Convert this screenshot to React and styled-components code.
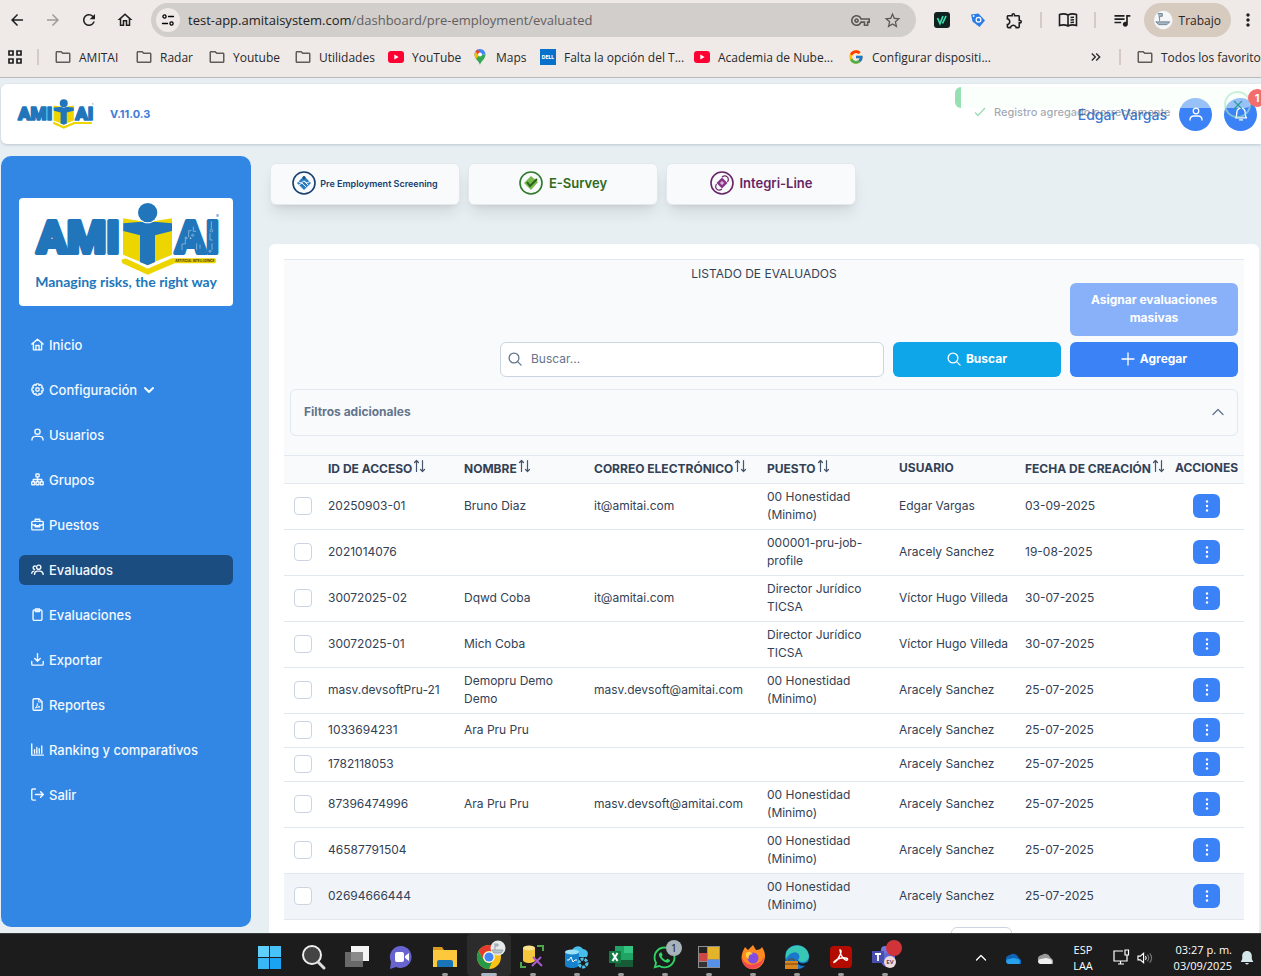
import React from 'react'
import styled, { createGlobalStyle } from 'styled-components'
import {
    MdArrowBack, MdArrowForward, MdRefresh, MdOutlineHome, MdStarBorder, MdOutlineExtension,
    MdQueueMusic, MdMoreVert, MdOutlineVpnKey, MdOutlineFolder, MdKeyboardDoubleArrowRight
} from 'react-icons/md'
import { FcGoogle } from 'react-icons/fc'
import { FaWhatsapp } from 'react-icons/fa'

const GlobalStyle = createGlobalStyle`
    * {
        box-sizing: border-box;
    }
    body {
        margin: 0;
        font-family: Inter, "Liberation Sans", sans-serif;
        font-size: 12px;
        color: #334155;
        background-color: #e8eff3;
    }
    button, input {
        font-family: inherit;
    }
    a {
        color: inherit;
        text-decoration: none;
    }
`

const Screen = styled.div`
    height: 100vh;
    display: flex;
    flex-direction: column;
    overflow: hidden;
`

/* Browser */

const Browser = styled.div`
    flex: none;
    background-color: #efeae8;
    border-bottom: 1px solid #b9b9bb;
    font-family: "Open Sans", "Noto Sans", sans-serif;
    color: #28282a;
`
const Toolbar = styled.div`
    height: 40px;
    display: flex;
    align-items: center;
`
const ToolGroup = styled.div`
    display: flex;
    align-items: center;
    gap: 2px;
`
const ToolButton = styled.button`
    width: 34px;
    height: 34px;
    padding: 0;
    border: none;
    background: none;
    display: flex;
    align-items: center;
    justify-content: center;
    font-size: ${props => props.$size || 18}px;
    color: ${props => props.$color || "#1f1f20"};
`
const MoreButton = styled(ToolButton)`
    width: 26px;
`
const Address = styled.div`
    flex: 1;
    height: 34px;
    margin: 0 9px;
    padding: 0 8px 0 5px;
    border-radius: 17px;
    background-color: #d2cecb;
    display: flex;
    align-items: center;
`
const SiteInfo = styled.button`
    width: 24px;
    height: 24px;
    padding: 0;
    border: none;
    border-radius: 50%;
    background-color: #efeae8;
    display: flex;
    align-items: center;
    justify-content: center;
`
const Url = styled.div`
    flex: 1;
    margin-left: 8px;
    font-size: 13px;
    color: #636060;
    b {
        font-weight: 400;
        color: #222;
    }
`
const AddressButton = styled(ToolButton)`
    width: 32px;
    color: #5b5856;
`
const Divider = styled.div`
    width: 2px;
    height: 16px;
    margin: 0 9px;
    background-color: #d6cbc4;
`
const Profile = styled.button`
    width: 87px;
    height: 34px;
    margin: 0 4px 0 5px;
    padding: 0 10px;
    border: none;
    border-radius: 17px;
    background-color: #d7cbc0;
    display: flex;
    align-items: center;
    gap: 6px;
    font-size: 12px;
    color: #2a2624;
`
const Bookmarks = styled.nav`
    height: 37px;
    padding: 0 0 3px 8px;
    display: flex;
    align-items: center;
    overflow: hidden;
`
const Bookmark = styled.a`
    flex: none;
    width: ${props => props.$width}px;
    display: flex;
    align-items: center;
    gap: 8px;
    font-size: 12px;
    white-space: nowrap;
    color: #28282a;
    svg {
        flex: none;
    }
`
const BookmarkDivider = styled(Divider)`
    flex: none;
    margin: 0 16px 0 15px;
`
const MoreBookmarks = styled.div`
    flex: none;
    width: 173px;
    margin-left: auto;
    display: flex;
    align-items: center;
    overflow: hidden;
    > svg {
        flex: none;
    }
`

/* App */

const AppArea = styled.div`
    flex: 1;
    min-height: 0;
    padding: 6px 0 0 1px;
    overflow: hidden;
    background-color: #e8eff3;
`
const Header = styled.header`
    position: relative;
    height: 60px;
    padding: 0 4px 0 16px;
    border-radius: 6px 0 0 6px;
    background-color: #fff;
    box-shadow: 0 1px 3px #b9c6cf;
    display: flex;
    align-items: center;
`
const Version = styled.span`
    margin-left: 16px;
    flex: 1;
    font-size: 11px;
    font-weight: 700;
    color: #3f7ed8;
`
const UserName = styled.span`
    font-size: 14px;
    font-weight: 500;
    color: #3b77d2;
`
const RoundButton = styled.button`
    position: relative;
    width: 33px;
    height: 33px;
    margin-left: 12px;
    padding: 0;
    border: none;
    border-radius: 50%;
    background-color: #3b82f6;
    color: #fff;
    display: flex;
    align-items: center;
    justify-content: center;
`
const Badge = styled.span`
    position: absolute;
    z-index: 2;
    top: -9px;
    right: -9px;
    width: 18px;
    height: 18px;
    border-radius: 50%;
    background-color: #f36d6d;
    font-size: 11px;
    font-weight: 700;
    line-height: 18px;
    text-align: center;
`
const Toast = styled.div`
    position: absolute;
    top: 3px;
    right: 10px;
    width: 296px;
    height: 21px;
    padding: 0 12px 0 13px;
    border-left: 6px solid #96e0b1;
    border-radius: 6px;
    background-color: rgba(246, 255, 249, 0.5);
    display: flex;
    align-items: flex-start;
    justify-content: space-between;
    pointer-events: none;
`
const ToastText = styled.div`
    display: flex;
    align-items: center;
    gap: 8px;
    margin-top: 16px;
    font-size: 11px;
    font-weight: 500;
    line-height: 18px;
    white-space: nowrap;
    color: rgba(100, 110, 125, 0.6);
`
const ToastClose = styled.div`
    position: absolute;
    top: 4px;
    right: 0;
    width: 27px;
    height: 27px;
    border: 2px solid rgba(170, 230, 195, 0.6);
    border-radius: 50%;
    display: flex;
    align-items: center;
    justify-content: center;
`
const Body = styled.div`
    margin-top: 12px;
    display: flex;
    align-items: flex-start;
    gap: 18px;
`
const Sidebar = styled.aside`
    flex: none;
    width: 250px;
    height: calc(100vh - 205px);
    padding: 42px 18px 0;
    border-radius: 10px;
    background-color: #3387e4;
`
const LogoBox = styled.div`
    height: 108px;
    border-radius: 4px;
    background-color: #fff;
    margin-bottom: 24px;
`
const Menu = styled.nav`
    display: flex;
    flex-direction: column;
    gap: 15px;
`
const MenuItem = styled.a`
    height: 30px;
    padding: 0 12px 1px;
    border-radius: 6px;
    background-color: ${props => props.$active ? "#1c4d80" : "transparent"};
    display: flex;
    align-items: center;
    gap: 5px;
    font-size: 13px;
    font-weight: 500;
    && {
        color: #f2f8ff;
    }
`
const Main = styled.main`
    flex: 1;
    min-width: 0;
    padding: 7px 2px 0 0;
`
const Tabs = styled.div`
    display: flex;
    gap: 8px;
    padding-left: 1px;
`
const Tab = styled.button`
    width: 190px;
    height: 42px;
    padding: 0 0 2px;
    border: 1px solid #e4e8ec;
    border-radius: 6px;
    background-color: #f8fafc;
    box-shadow: 0 10px 15px -3px rgba(0, 0, 0, 0.1), 0 4px 6px -4px rgba(0, 0, 0, 0.1);
    display: flex;
    align-items: center;
    justify-content: center;
    gap: ${props => props.$small ? 4 : 6}px;
    font-size: ${props => props.$small ? 9 : 13}px;
    font-weight: 600;
    color: ${props => props.color};
`
const Card = styled.section`
    margin-top: 39px;
    padding: 15px 15px 40px;
    border-radius: 6px;
    background-color: #fff;
`
const ListHeader = styled.div`
    padding: 5px 6px 19px;
    border-top: 1px solid #e2e8f0;
    background-color: #f8fafc;
`
const ListTitle = styled.h1`
    margin: 0;
    font-size: 12px;
    font-weight: 400;
    line-height: 18px;
    text-align: center;
    color: #334155;
`
const Actions = styled.div`
    display: grid;
    grid-template-columns: 1fr 168px 168px;
    gap: 6px 9px;
    padding-left: 210px;
`
const ActionButton = styled.button`
    grid-column: ${props => props.$last ? 3 : "auto"};
    height: ${props => props.$tall ? 53 : 35}px;
    padding: 0 16px 2px;
    border: none;
    border-radius: 6px;
    background-color: ${props => props.color};
    display: flex;
    align-items: center;
    justify-content: center;
    gap: 5px;
    font-size: 12px;
    font-weight: 700;
    line-height: 18px;
    color: #fff;
`
const Search = styled.label`
    height: 35px;
    padding: 0 7px 2px;
    border: 1px solid #cbd5e1;
    border-radius: 6px;
    background-color: #fff;
    color: #64748b;
    display: flex;
    align-items: center;
    gap: 9px;
`
const SearchInput = styled.input`
    flex: 1;
    min-width: 0;
    padding: 0;
    border: none;
    outline: none;
    font-size: 12px;
    &::placeholder {
        color: #64748b;
        opacity: 1;
    }
`
const Filters = styled.button`
    width: 100%;
    height: 47px;
    margin-top: 12px;
    padding: 0 12px 2px 13px;
    border: 1px solid #e2e8f0;
    border-radius: 6px;
    background-color: #f8fafc;
    display: flex;
    align-items: center;
    justify-content: space-between;
    font-size: 12px;
    font-weight: 700;
    color: #64748b;
`
const Table = styled.table`
    width: 100%;
    table-layout: fixed;
    border-collapse: collapse;
`
const Th = styled.th`
    height: 28px;
    padding: 0 0 3px 6px;
    border-top: 1px solid #e2e8f0;
    border-bottom: 1px solid #e2e8f0;
    background-color: #f8fafc;
    font-size: 12px;
    font-weight: 700;
    line-height: 18px;
    text-align: left;
    white-space: nowrap;
    svg {
        margin-left: 1px;
    }
`
const Td = styled.td`
    padding: 4px 6px 5px;
    border-bottom: 1px solid #e2e8f0;
    font-size: 12px;
    line-height: 18px;
    color: #334155;
    white-space: ${props => props.$wrap ? "normal" : "nowrap"};
`
const Row = styled.tr`
    background-color: ${props => props.$hover ? "#f1f5f9" : "#fff"};
`
const Check = styled.input`
    appearance: none;
    display: block;
    width: 18px;
    height: 18px;
    margin: 0 0 0 4px;
    border: 1px solid #cbd5e1;
    border-radius: 4px;
    background-color: #fff;
`
const RowButton = styled.button`
    width: 27px;
    height: 24px;
    margin: 0 auto;
    padding: 0;
    border: none;
    border-radius: 6px;
    background-color: #3b82f6;
    display: flex;
    align-items: center;
    justify-content: center;
`
const Paginator = styled.div`
    display: flex;
    justify-content: flex-end;
    padding: 7px 232px 0 0;
`
const PageSize = styled.select`
    width: 61px;
    height: 34px;
    border: 1px solid #cbd5e1;
    border-radius: 6px;
    background-color: #fff;
    appearance: none;
`

/* Taskbar */

const Taskbar = styled.footer`
    position: relative;
    flex: none;
    height: 43px;
    padding: 0 7px 0 247px;
    border-top: 1px solid #3a3a3a;
    background-color: #1c1c1c;
    color: #fff;
    font-family: "Open Sans", "Noto Sans", sans-serif;
    display: flex;
    align-items: center;
`
const TaskButton = styled.button`
    position: relative;
    flex: none;
    width: 44px;
    height: 42px;
    padding: 4px 0 0;
    border: none;
    border-radius: 4px;
    background-color: ${props => props.$active ? "#2c2c2c" : "transparent"};
    display: flex;
    align-items: center;
    justify-content: center;
    &::after {
        content: "";
        position: absolute;
        bottom: 0;
        width: ${props => props.$active ? 16 : 6}px;
        height: 3px;
        border-radius: 2px;
        background-color: ${props => props.$active ? "#a9b8c4" : props.$open ? "#9a9a9a" : "transparent"};
    }
`
const Tray = styled.div`
    margin-left: auto;
    display: flex;
    align-items: center;
    padding-top: 5px;
    font-size: 11px;
    line-height: 16px;
`
const TrayIcon = styled.span`
    width: ${props => props.$width}px;
    display: flex;
    justify-content: center;
`
const Language = styled.div`
    width: 44px;
    text-align: center;
`
const Clock = styled.div`
    width: 79px;
    text-align: right;
    margin-right: 7px;
    white-space: nowrap;
`

/* Drawings */

function Stroke({ size = 14, width = 1.3, children }) {
    return (
        <svg width={size} height={size} viewBox="0 0 14 14" fill="none" stroke="currentColor" strokeWidth={width} strokeLinecap="round" strokeLinejoin="round" aria-hidden="true">
            {children}
        </svg>
    )
}

const menuIcons = {
    home: <><path d="M.9 6.6 7 1.4l6.1 5.2M2.6 5.6v7.2h8.8V5.6" /><path d="M5.3 12.6V8h3.4v4.6" /></>,
    cog: <><circle cx="7" cy="7" r="1.9" /><path d="M5.7.9h2.6l.4 1.7 1.5-.9 1.9 1.9-.9 1.5 1.8.5v2.7l-1.8.5.9 1.5-1.9 1.9-1.5-.9-.4 1.8H5.7l-.4-1.8-1.5.9-1.9-1.9.9-1.5L1 8.3V5.6l1.8-.5-.9-1.5 1.9-1.9 1.5.9z" /></>,
    user: <><circle cx="7" cy="4" r="2.8" /><path d="M1 13c0-2.5 1.8-4 4-4h4c2.2 0 4 1.5 4 4" /></>,
    sitemap: <><rect x="5.3" y="1" width="3.4" height="3.2" rx=".6" /><rect x=".8" y="9.4" width="3.2" height="3.2" rx=".6" /><rect x="5.4" y="9.4" width="3.2" height="3.2" rx=".6" /><rect x="10" y="9.4" width="3.2" height="3.2" rx=".6" /><path d="M7 4.2v5M2.4 9.2V7h9.2v2.2" /></>,
    briefcase: <><rect x=".8" y="3.6" width="12.4" height="9.2" rx="1" /><path d="M4.5 3.5V1.3h5v2.2M.9 7l3.5 1.2h5.2L13.1 7M4.6 7v2.6h4.8V7" /></>,
    users: <><circle cx="8.3" cy="4.6" r="2.3" /><path d="M3.7 12.2c.2-2.4 1.5-3.5 3.3-3.5h2.6c2 0 3.3 1.3 3.5 3.5M4.9 3.3C3 3 2.2 4.2 2.3 5.3c.1 1 .8 1.5 1.5 1.7M.8 11c.1-1.4.9-2.2 2.3-2.3" /></>,
    clipboard: <><rect x="2.2" y="2.2" width="9.6" height="11.2" rx="1.5" /><path d="M4.8 2.2V1h4.4v2.8H4.8z" /></>,
    download: <path d="M.8 9.2v2.6c0 .8.6 1.3 1.3 1.3h9.8c.8 0 1.3-.6 1.3-1.3V9.2M7 .8v8M4 6l3 3 3-3" />,
    pdf: <><path d="M2.2 2c0-.7.5-1.2 1.2-1.2h5.2l3.3 3.3v7.9c0 .7-.5 1.2-1.2 1.2H3.4c-.7 0-1.2-.5-1.2-1.2z" /><path d="M8.3 1v3.3h3.4M4.6 10.8C6.5 9.5 7 7.8 6.9 6M6.8 7.6c.6 1.2 1.6 2 3 2.1-2 0-3.2.2-4.6.8" strokeWidth="1" /></>,
    chart: <path d="M.8 1v12h12.6M3.8 11V7.2M6.3 11V4.8M8.9 11V6.2M11.6 11V3.3" />,
    logout: <path d="M4.8 13H2.2C1.4 13 .8 12.4.8 11.7V2.3C.8 1.6 1.4 1 2.2 1h2.6M4.8 7h8.4M10.3 4l3 3-3 3" />
}

function BrandMark({ box, width, height, detailed }) {
    return (
        <svg width={width} height={height} viewBox={box} role="img" aria-label="Amitai">
            <g fill="#2176bb" stroke="#2176bb" strokeWidth="12" strokeLinejoin="round" fontFamily="Roboto, sans-serif" fontWeight="900" fontSize="134">
                <text x="110" y="309">AMI</text>
                <text x="526" y="309">AI</text>
            </g>
            {detailed && (
                <g stroke="#a9cdea" strokeWidth="2" fill="none">
                    <path d="M546 300v-18h10v-14M566 262v-20h8M580 230v14h8M590 300v-20M600 296v-12M634 214v22M630 250v20h8M636 280v20" />
                    <circle cx="558" cy="264" r="3" /><circle cx="578" cy="256" r="3" /><circle cx="634" cy="242" r="4" /><circle cx="630" cy="304" r="3" />
                </g>
            )}
            <path fill="#edd500" d="M369 205l74 12 73-12v112l-73 28-74-28z" />
            <path fill="#edd500" d="M364 329l14-4 65 31 72-31h130q8 7 0 15H524l-81 34-76-34z" />
            <path fill="#fff" d="M369 314l51 21v7l-51-20zM516 314l-51 21v7l51-20z" />
            <path fill="#2176bb" d="M370 220l45-4h56l45 4v23l-51 13v80l-22 10-23-10v-80l-50-13z" />
            <circle cx="443" cy="188" r="32" fill="#fff" />
            <circle cx="443" cy="188" r="29" fill="#2176bb" />
            <text x="648" y="205" fontSize="13" fill="#2176bb" fontFamily="Inter, sans-serif">®</text>
            {detailed && <>
                <text x="526" y="337" fontSize="9" fontWeight="700" fill="#3b3a12" fontFamily="Inter, sans-serif">ARTIFICIAL INTELLIGENCE</text>
                <text x="378" y="410" textAnchor="middle" fontSize="42" fontWeight="700" fill="#2176bb" fontFamily="Lato, sans-serif">Managing risks, the right way</text>
            </>}
        </svg>
    )
}

function TabIcon({ kind, color }) {
    return (
        <svg width="24" height="24" viewBox="0 0 24 24" fill="none" aria-hidden="true">
            <circle cx="12" cy="12" r="11" stroke={color} strokeWidth="1.6" />
            {kind === "screening" && <>
                <path d="M12 5l7 7-7 7-7-7z" fill="#2b7cc0" />
                <path d="M5 10l4 2 3-2 3 2 4-2M7 14l3-2 4 4M12 10l4 4" stroke="#fff" strokeWidth=".9" />
                <circle cx="12" cy="6.5" r="1.5" fill="#1b4c80" />
            </>}
            {kind === "survey" && <>
                <path d="M12 5l7 6-7 8-7-7z" fill="#79b84a" />
                <path d="M8 11l3 4 7-7" stroke="#28651f" strokeWidth="2" />
            </>}
            {kind === "line" && <>
                <path d="M12 6.500l5.500 5.500-5.500 5.500L6.500 12z" fill="#873584" />
                <path d="M12 6c4-3 8 1 5.500 5M12 18c-4 3-8-1-5.500-5" stroke="#70296e" strokeWidth="1.2" />
                <path d="M12 10v4M10 12h4" stroke="#fff" strokeWidth=".8" />
            </>}
        </svg>
    )
}

const YoutubeIcon = () => (
    <svg width="16" height="16" viewBox="0 0 16 16" aria-hidden="true">
        <rect y="2" width="16" height="12" rx="3" fill="#f03" />
        <path d="M6.3 5.5v5L10.6 8z" fill="#fff" />
    </svg>
)
const MapsIcon = () => (
    <svg width="16" height="16" viewBox="0 0 16 16" aria-hidden="true">
        <path d="M8 16C7.5 12.5 2.5 10 2.5 5.5h11C13.5 10 8.5 12.5 8 16z" fill="#34a853" />
        <path d="M2.5 5.5C2.5 3 4.5 0 8 0s5.5 3 5.5 5.5z" fill="#4285f4" />
        <path d="M3.6 2.2 8 5.5 4 10C3 8.6 2.5 7.2 2.5 5.5c0-1.3.4-2.4 1.1-3.3z" fill="#fbbc04" />
        <path d="M3.6 2.2A5.500 5.500 0 0 1 6 .4L8 4 6 6z" fill="#ea4335" />
        <circle cx="8" cy="5.5" r="2" fill="#fff" />
    </svg>
)
const DellIcon = () => (
    <svg width="16" height="16" viewBox="0 0 16 16" aria-hidden="true">
        <rect width="16" height="16" fill="#0672cb" />
        <text x="8" y="10" textAnchor="middle" fontSize="5" fontWeight="800" fill="#fff" fontFamily="Inter, sans-serif">DELL</text>
    </svg>
)
const Folder = () => <MdOutlineFolder size={18} color="#5f5b59" style={{ margin: "0 -1px" }} />

const bookmarks = [
    { label: "AMITAI", width: 81, icon: <Folder /> },
    { label: "Radar", width: 73, icon: <Folder /> },
    { label: "Youtube", width: 86, icon: <Folder /> },
    { label: "Utilidades", width: 93, icon: <Folder /> },
    { label: "YouTube", width: 84, icon: <YoutubeIcon /> },
    { label: "Maps", width: 68, icon: <MapsIcon /> },
    { label: "Falta la opción del T...", width: 154, icon: <DellIcon /> },
    { label: "Academia de Nube...", width: 154, icon: <YoutubeIcon /> },
    { label: "Configurar dispositi...", width: 140, icon: <FcGoogle size={16} /> }
]

const menu = [
    { label: "Inicio", icon: "home" },
    { label: "Configuración", icon: "cog", sub: true },
    { label: "Usuarios", icon: "user" },
    { label: "Grupos", icon: "sitemap" },
    { label: "Puestos", icon: "briefcase" },
    { label: "Evaluados", icon: "users", active: true },
    { label: "Evaluaciones", icon: "clipboard" },
    { label: "Exportar", icon: "download" },
    { label: "Reportes", icon: "pdf" },
    { label: "Ranking y comparativos", icon: "chart" },
    { label: "Salir", icon: "logout" }
]

const columns = [
    { label: "", width: 38 },
    { label: "ID DE ACCESO", width: 136, sort: true },
    { label: "NOMBRE", width: 130, sort: true },
    { label: "CORREO ELECTRÓNICO", width: 173, sort: true },
    { label: "PUESTO", width: 132, sort: true },
    { label: "USUARIO", width: 126 },
    { label: "FECHA DE CREACIÓN", width: 150, sort: true },
    { label: "ACCIONES", width: 75 }
]

const rows = [
    ["20250903-01", "Bruno Diaz", "it@amitai.com", "00 Honestidad (Minimo)", "Edgar Vargas", "03-09-2025"],
    ["2021014076", "", "", "000001-pru-job-profile", "Aracely Sanchez", "19-08-2025"],
    ["30072025-02", "Dqwd Coba", "it@amitai.com", "Director Jurídico TICSA", "Víctor Hugo Villeda", "30-07-2025"],
    ["30072025-01", "Mich Coba", "", "Director Jurídico TICSA", "Víctor Hugo Villeda", "30-07-2025"],
    ["masv.devsoftPru-21", "Demopru Demo Demo", "masv.devsoft@amitai.com", "00 Honestidad (Minimo)", "Aracely Sanchez", "25-07-2025"],
    ["1033694231", "Ara Pru Pru", "", "", "Aracely Sanchez", "25-07-2025"],
    ["1782118053", "", "", "", "Aracely Sanchez", "25-07-2025"],
    ["87396474996", "Ara Pru Pru", "masv.devsoft@amitai.com", "00 Honestidad (Minimo)", "Aracely Sanchez", "25-07-2025"],
    ["46587791504", "", "", "00 Honestidad (Minimo)", "Aracely Sanchez", "25-07-2025"],
    ["02694666444", "", "", "00 Honestidad (Minimo)", "Aracely Sanchez", "25-07-2025"]
]

const SortIcon = () => (
    <svg width="13" height="14" viewBox="0 0 13 14" fill="none" stroke="#475569" strokeWidth="1.2" strokeLinecap="round" strokeLinejoin="round" aria-hidden="true">
        <path d="M3.5 12.5v-11M1.5 3.5l2-2 2 2M9.5 1.5v11M7.5 10.5l2 2 2-2" />
    </svg>
)

/* Taskbar icons share a 28 unit canvas */
const tasks = [
    { name: "Inicio de Windows", art: <><path fill="#5fd0fb" d="M3 3h11v11H3z" /><path fill="#47c2f8" d="M15 3h11v11H15z" /><path fill="#38b6f5" d="M3 15h11v11H3z" /><path fill="#1aa3f2" d="M15 15h11v11H15z" /></> },
    { name: "Buscar", art: <><circle cx="13" cy="12" r="9" fill="#444" stroke="#eee" strokeWidth="2" /><path d="m19 19 6 6" stroke="#ddd" strokeWidth="3" strokeLinecap="round" /></> },
    { name: "Vista de tareas", art: <><path fill="#f4f4f4" d="M8 3h18v15H8z" /><path fill="#777" fillOpacity=".85" d="M2 9h18v15H2z" /></> },
    { name: "Chat", art: <><path fill="#6763cf" d="M14 3a11 11 0 1 1-5 21l-6 2 1-7A11 11 0 0 1 14 3z" /><rect x="8" y="9" width="9" height="10" rx="2" fill="#fff" /><path fill="#fff" d="m18 13 4-3v8l-4-3z" /></> },
    { name: "Explorador", open: true, art: <><path fill="#d79a1e" d="M2 4h9l2 3H2z" /><path fill="#fcc93c" d="M2 7h24v17H2z" /><path fill="#1a74b8" d="M6 24v-5q0-2 2-2h12q2 0 2 2v5z" /></> },
    { name: "Chrome", open: true, active: true, art: <><circle cx="14" cy="14" r="12" fill="#fbc116" /><path fill="#e33b2e" d="M3.6 8A12 12 0 0 1 24.4 8H14a6 6 0 0 0-5.2 9z" /><path fill="#279847" d="M3.6 8 8.8 17a6 6 0 0 0 8 2.2L14 26A12 12 0 0 1 3.6 8z" /><circle cx="14" cy="14" r="5.8" fill="#fff" /><circle cx="14" cy="14" r="4.6" fill="#4285f4" /><circle cx="23" cy="5" r="7.5" fill="#e6e9e9" /><path d="M19 1h4v2h-3v4M17 7h11l-2 3h-7z" stroke="#8d989e" strokeWidth=".8" fill="#b6c6cf" /></> },
    { name: "SQL", open: true, art: <><path fill="#f4c63d" d="M4 5v12c0 4 12 4 12 0V5z" /><ellipse cx="10" cy="5" rx="6" ry="2.5" fill="#fbe38b" /><path d="M18 3h6v5M2 19v5h5" stroke="#4fa64d" strokeWidth="2" fill="none" /><path d="m13 23 9-9M14 14l9 9" stroke="#ab5bcb" strokeWidth="2" /></> },
    { name: "Azure Data Studio", open: true, art: <><path fill="#47bdea" d="M9 9a6 6 0 0 1 11-3 5 5 0 0 1 4 8H11z" /><path fill="#1682cc" d="M2 9v13c0 4 14 4 14 0V9z" /><ellipse cx="9" cy="9" rx="7" ry="2.5" fill="#9be0f8" /><path d="M4 17h2l2-3 2 5 2-2h2" stroke="#fff" fill="none" /><circle cx="20" cy="20" r="4" fill="none" stroke="#4dc1ea" strokeWidth="3" strokeDasharray="3 1" /></> },
    { name: "Excel", open: true, art: <><path fill="#21a366" d="M8 3h18v21H8z" /><path fill="#33c481" d="M17 3h9v7h-9z" /><path fill="#185c37" d="M8 17h18v7H8z" /><path fill="#107c41" d="M2 8h12v12H2z" /><path d="m5.5 10 5 8m0-8-5 8" stroke="#fff" strokeWidth="2" /></> },
    { name: "WhatsApp", open: true, art: <><FaWhatsapp x="1" y="2" size={25} color="#2fd366" /><circle cx="23" cy="5" r="8" fill="#a7b2ba" /><text x="23" y="9" fontSize="11" textAnchor="middle" fill="#222">1</text></> },
    { name: "Servicios", open: true, art: <><path fill="#8d8d8d" d="M3 3h22v22H3z" /><path fill="#222" d="M4 4h8v6H4z" /><path fill="#ce4747" d="M4 10h8v8H4z" /><path fill="#e4b32c" d="M13 4h11v12H13z" /><path fill="#5790eb" d="M13 17h11v7H13z" /><path fill="#333" d="M4 19h8v5H4z" /></> },
    { name: "Firefox", open: true, art: <><path fill="#ff8a20" d="M4 8l2-4 3 3 5-5 3 5c3 0 5-1 6-3 3 5 4 9 2 14a11.5 11.5 0 0 1-22 0C2 14 3 11 4 8z" /><path fill="#f3484f" d="M3 15c3 6 8 8 13 6 5-1 8-4 9-8 0 8-6 13-12 13-5 0-10-4-10-11z" /><circle cx="14" cy="15" r="5.5" fill="#824ce2" /><path fill="#ffd13e" d="M7 10c3-3 6 0 7 1-4 0-5 3-4 5-3-1-4-4-3-6z" /></> },
    { name: "Edge", open: true, art: <><circle cx="14" cy="14" r="12" fill="#1878ce" /><path fill="#38c7b4" d="M3 10C6 0 24-1 26 13c0 6-8 8-11 4 4-4-1-10-6-7-3 1-5 4-6 6z" /><path fill="#151b24" d="M14 17c3 5 8 4 12 1l-1 4c-5 2-11 1-11-5z" /><path fill="#d8851d" d="M2 18h13v8H2z" /><path d="M6 18v-2h5v2M2 21h13" stroke="#704118" fill="none" /></> },
    { name: "Acrobat", open: true, art: <><rect x="3" y="3" width="22" height="22" rx="4" fill="#b30b00" /><path d="M13 7c3 0-1 9-5 12-3 2 0-3 6-4 5-1 8 1 6 2s-7-4-7-10z" fill="none" stroke="#fff" strokeWidth="1.4" /></> },
    { name: "Teams", open: true, art: <><circle cx="14" cy="7" r="4" fill="#7177df" /><path fill="#6069cf" d="M10 10h14v9c-2 7-14 7-14-2z" /><path fill="#474ead" d="M1 8h12v12H1z" /><path d="M4 11h6M7 11v7" stroke="#fff" strokeWidth="1.8" /><circle cx="19" cy="19" r="6" fill="#eedadd" /><text x="19" y="21" fontSize="6" fontWeight="700" textAnchor="middle" fill="#634454">EV</text><circle cx="23" cy="5" r="8" fill="#d13438" /></> }
]

export default function App() {
    return (
        <Screen>
            <GlobalStyle />
            <Browser>
                <Toolbar>
                    <ToolGroup>
                        <ToolButton aria-label="Atrás"><MdArrowBack /></ToolButton>
                        <ToolButton aria-label="Adelante" $color="#a09b99"><MdArrowForward /></ToolButton>
                        <ToolButton aria-label="Recargar"><MdRefresh /></ToolButton>
                        <ToolButton aria-label="Página principal"><MdOutlineHome /></ToolButton>
                    </ToolGroup>
                    <Address>
                        <SiteInfo aria-label="Información del sitio">
                            <Stroke><circle cx="3.5" cy="3.5" r="1.6" /><path d="M7.5 3.5h5M1.5 10.5h5" /><circle cx="10.5" cy="10.5" r="1.6" /></Stroke>
                        </SiteInfo>
                        <Url><b>test-app.amitaisystem.com</b>/dashboard/pre-employment/evaluated</Url>
                        <AddressButton aria-label="Contraseñas" $size={19}><MdOutlineVpnKey /></AddressButton>
                        <AddressButton aria-label="Favorito" $size={19}><MdStarBorder /></AddressButton>
                    </Address>
                    <ToolGroup>
                        <ToolButton aria-label="Extensión">
                            <svg width="16" height="16" viewBox="0 0 16 16"><rect width="16" height="16" rx="3" fill="#10221f" /><path d="M3.5 6 6 11.5l3-7.5M8.5 11.5l3.5-7.5" stroke="#3be0b0" strokeWidth="1.7" fill="none" /></svg>
                        </ToolButton>
                        <ToolButton aria-label="Etiquetas">
                            <svg width="16" height="16" viewBox="0 0 16 16"><path d="M1 2.5 8.5 1.5 15 8.5 9.5 15 2.5 9.5z" fill="#2a7de9" /><circle cx="8.5" cy="7.8" r="2.4" fill="none" stroke="#fff" strokeWidth="1.2" /><circle cx="3.6" cy="4" r=".9" fill="#fff" /></svg>
                        </ToolButton>
                        <ToolButton aria-label="Extensiones" $size={19}><MdOutlineExtension /></ToolButton>
                    </ToolGroup>
                    <Divider />
                    <ToolButton aria-label="Modo de lectura">
                        <svg width="20" height="16" viewBox="0 0 20 16" fill="none" stroke="currentColor" strokeWidth="1.6"><path d="M10 3C7.5 1.7 4 1.7 1.5 2.5v11C4 12.7 7.5 12.7 10 14c2.5-1.3 6-1.3 8.5-.5v-11C16 1.7 12.5 1.7 10 3zM10 3v11M12.5 5.5l3.5-.2M12.5 8l3.5-.2M12.5 10.5l3.5-.2" /></svg>
                    </ToolButton>
                    <Divider />
                    <ToolButton aria-label="Multimedia" $size={20}><MdQueueMusic /></ToolButton>
                    <Profile>
                        <svg width="20" height="20" viewBox="0 0 20 20" aria-hidden="true"><circle cx="10" cy="10" r="10" fill="#f4f6f7" /><path d="M4 3h5v3H6v5M2 12h15l-3 3H5z" fill="#9fb7c8" stroke="#77858f" /></svg>
                        Trabajo
                    </Profile>
                    <MoreButton aria-label="Más" $size={20}><MdMoreVert /></MoreButton>
                </Toolbar>
                <Bookmarks>
                    <svg width="14" height="14" viewBox="0 0 14 14" fill="none" stroke="#222" strokeWidth="1.7" style={{ flex: "none" }} aria-hidden="true"><path d="M1 1h4v4H1zM9 1h4v4H9zM1 9h4v4H1zM9 9h4v4H9z" /></svg>
                    <BookmarkDivider />
                    {bookmarks.map(item => (
                        <Bookmark key={item.label} href="#" $width={item.width}>{item.icon}{item.label}</Bookmark>
                    ))}
                    <MoreBookmarks>
                        <MdKeyboardDoubleArrowRight size={16} />
                        <BookmarkDivider />
                        <Bookmark href="#" $width={130}><Folder />Todos los favoritos</Bookmark>
                    </MoreBookmarks>
                </Bookmarks>
            </Browser>

            <AppArea>
                <Header>
                    <BrandMark box="105 158 556 218" width={77} height={30} />
                    <Version>V.11.0.3</Version>
                    <UserName>Edgar Vargas</UserName>
                    <RoundButton aria-label="Perfil"><Stroke>{menuIcons.user}</Stroke></RoundButton>
                    <RoundButton aria-label="Notificaciones">
                        <Stroke><path d="M1.5 10.8c1.5-1.3 1-3 1.3-5.5C3.2 2.5 4.8 1.2 7 1.2s3.8 1.3 4.2 4.1c.3 2.5-.2 4.2 1.3 5.5zM5.5 12.9h3" /></Stroke>
                        <Badge>1</Badge>
                    </RoundButton>
                    <Toast role="status">
                        <ToastText>
                            <svg width="12" height="10" viewBox="0 0 12 10" fill="none" stroke="#9bdcb4" strokeWidth="1.3"><path d="M1 5.5 4 8.5 11 1" /></svg>
                            <span>Registro agregado correctamente</span>
                        </ToastText>
                        <ToastClose>
                            <svg width="10" height="10" viewBox="0 0 10 10" stroke="#2b9b9b" strokeWidth="1.2"><path d="m1 1 8 8M9 1 1 9" /></svg>
                        </ToastClose>
                    </Toast>
                </Header>

                <Body>
                    <Sidebar>
                        <LogoBox><BrandMark box="57 144 642 324" width="100%" height="100%" detailed /></LogoBox>
                        <Menu>
                            {menu.map(item => (
                                <MenuItem key={item.label} href="#" $active={item.active}>
                                    <Stroke size={13} width={1.5}>{menuIcons[item.icon]}</Stroke>
                                    {item.label}
                                    {item.sub && <Stroke width={2}><path d="m3 5 4 4 4-4" /></Stroke>}
                                </MenuItem>
                            ))}
                        </Menu>
                    </Sidebar>

                    <Main>
                        <Tabs>
                            <Tab color="#173f70" $small><TabIcon kind="screening" color="#173f70" />Pre Employment Screening</Tab>
                            <Tab color="#2f6b20"><TabIcon kind="survey" color="#2f7a2b" />E-Survey</Tab>
                            <Tab color="#682565"><TabIcon kind="line" color="#682565" />Integri-Line</Tab>
                        </Tabs>

                        <Card>
                            <ListHeader>
                                <ListTitle>LISTADO DE EVALUADOS</ListTitle>
                                <Actions>
                                    <ActionButton color="#89b1f9" $last $tall disabled>Asignar evaluaciones masivas</ActionButton>
                                    <Search>
                                        <Stroke><circle cx="6" cy="6" r="4.9" /><path d="m9.6 9.6 3.5 3.5" /></Stroke>
                                        <SearchInput type="text" placeholder="Buscar..." aria-label="Buscar" />
                                    </Search>
                                    <ActionButton color="#0ea5e9">
                                        <Stroke><circle cx="6" cy="6" r="4.9" /><path d="m9.6 9.6 3.5 3.5" /></Stroke>
                                        Buscar
                                    </ActionButton>
                                    <ActionButton color="#3b82f6"><Stroke><path d="M7 1v12M1 7h12" /></Stroke>Agregar</ActionButton>
                                </Actions>
                                <Filters>
                                    Filtros adicionales
                                    <Stroke><path d="m2 9.5 5-5 5 5" /></Stroke>
                                </Filters>
                            </ListHeader>

                            <Table>
                                <colgroup>
                                    {columns.map(col => <col key={col.label} width={col.width} />)}
                                </colgroup>
                                <thead>
                                    <tr>
                                        {columns.map(col => (
                                            <Th key={col.label} scope="col">{col.label}{col.sort && <SortIcon />}</Th>
                                        ))}
                                    </tr>
                                </thead>
                                <tbody>
                                    {rows.map((row, i) => (
                                        <Row key={row[0]} $hover={i === rows.length - 1}>
                                            <Td><Check type="checkbox" aria-label={row[0]} /></Td>
                                            {row.map((value, j) => <Td key={j} $wrap={j === 1 || j === 3}>{value}</Td>)}
                                            <Td>
                                                <RowButton aria-label="Acciones">
                                                    <svg width="14" height="14" viewBox="0 0 14 14" fill="#fff"><circle cx="7" cy="2.5" r="1.2" /><circle cx="7" cy="7" r="1.2" /><circle cx="7" cy="11.5" r="1.2" /></svg>
                                                </RowButton>
                                            </Td>
                                        </Row>
                                    ))}
                                </tbody>
                            </Table>
                            <Paginator>
                                <PageSize aria-label="Filas por página"><option>10</option></PageSize>
                            </Paginator>
                        </Card>
                    </Main>
                </Body>
            </AppArea>

            <Taskbar>
                {tasks.map(task => (
                    <TaskButton key={task.name} aria-label={task.name} $open={task.open} $active={task.active}>
                        <svg width="28" height="28" viewBox="0 0 28 28" overflow="visible">{task.art}</svg>
                    </TaskButton>
                ))}
                <Tray>
                    <TrayIcon $width={32}><Stroke><path d="m2.5 9 4.5-4.5L11.5 9" /></Stroke></TrayIcon>
                    <TrayIcon $width={32}><svg width="17" height="12" viewBox="0 0 17 12"><path d="M1 8a4 4 0 0 1 4-5 5 5 0 0 1 8 2l3 3v4H4z" fill="#0e64b5" /><path d="M1 10a3 3 0 0 1 3-3l5-1 4 1a3 3 0 0 1 1 5H4a3 3 0 0 1-3-2z" fill="#28a1ed" /></svg></TrayIcon>
                    <TrayIcon $width={32}><svg width="17" height="12" viewBox="0 0 17 12"><path d="M1 8a4 4 0 0 1 4-5 5 5 0 0 1 8 2l3 3v4H4z" fill="#9a9a9a" /><path d="M1 10a3 3 0 0 1 3-3l5-1 4 1a3 3 0 0 1 1 5H4a3 3 0 0 1-3-2z" fill="#f0f0f0" /></svg></TrayIcon>
                    <Language>ESP<br />LAA</Language>
                    <TrayIcon $width={32}><svg width="17" height="17" viewBox="0 0 17 17" fill="none" stroke="#fff" strokeWidth="1.2"><path d="M10 2H1v10h13V8M5 15h6M7.5 12v3M12 1h3.5v5H12zM14 6v2" /></svg></TrayIcon>
                    <TrayIcon $width={16}><svg width="17" height="14" viewBox="0 0 17 14" fill="none" stroke="#fff" strokeWidth="1.2"><path d="M1 5h2.5L7 2v10L3.5 9H1zM9 5q1.5 2 0 4" /><path d="M11 3.5q3 3.5 0 7M13.5 2q4 5 0 10" stroke="#777" /></svg></TrayIcon>
                    <Clock>03:27 p. m.<br />03/09/2025</Clock>
                    <TrayIcon $width={15}><svg width="14" height="16" viewBox="0 0 14 16" fill="#d6e7ea"><path d="M7 1c3 0 4.8 2.2 4.8 5v3l1.5 3H.7l1.5-3V6C2.2 3.2 4 1 7 1zM5 13h4q-2 3-4 0z" /></svg></TrayIcon>
                </Tray>
            </Taskbar>
        </Screen>
    )
}
